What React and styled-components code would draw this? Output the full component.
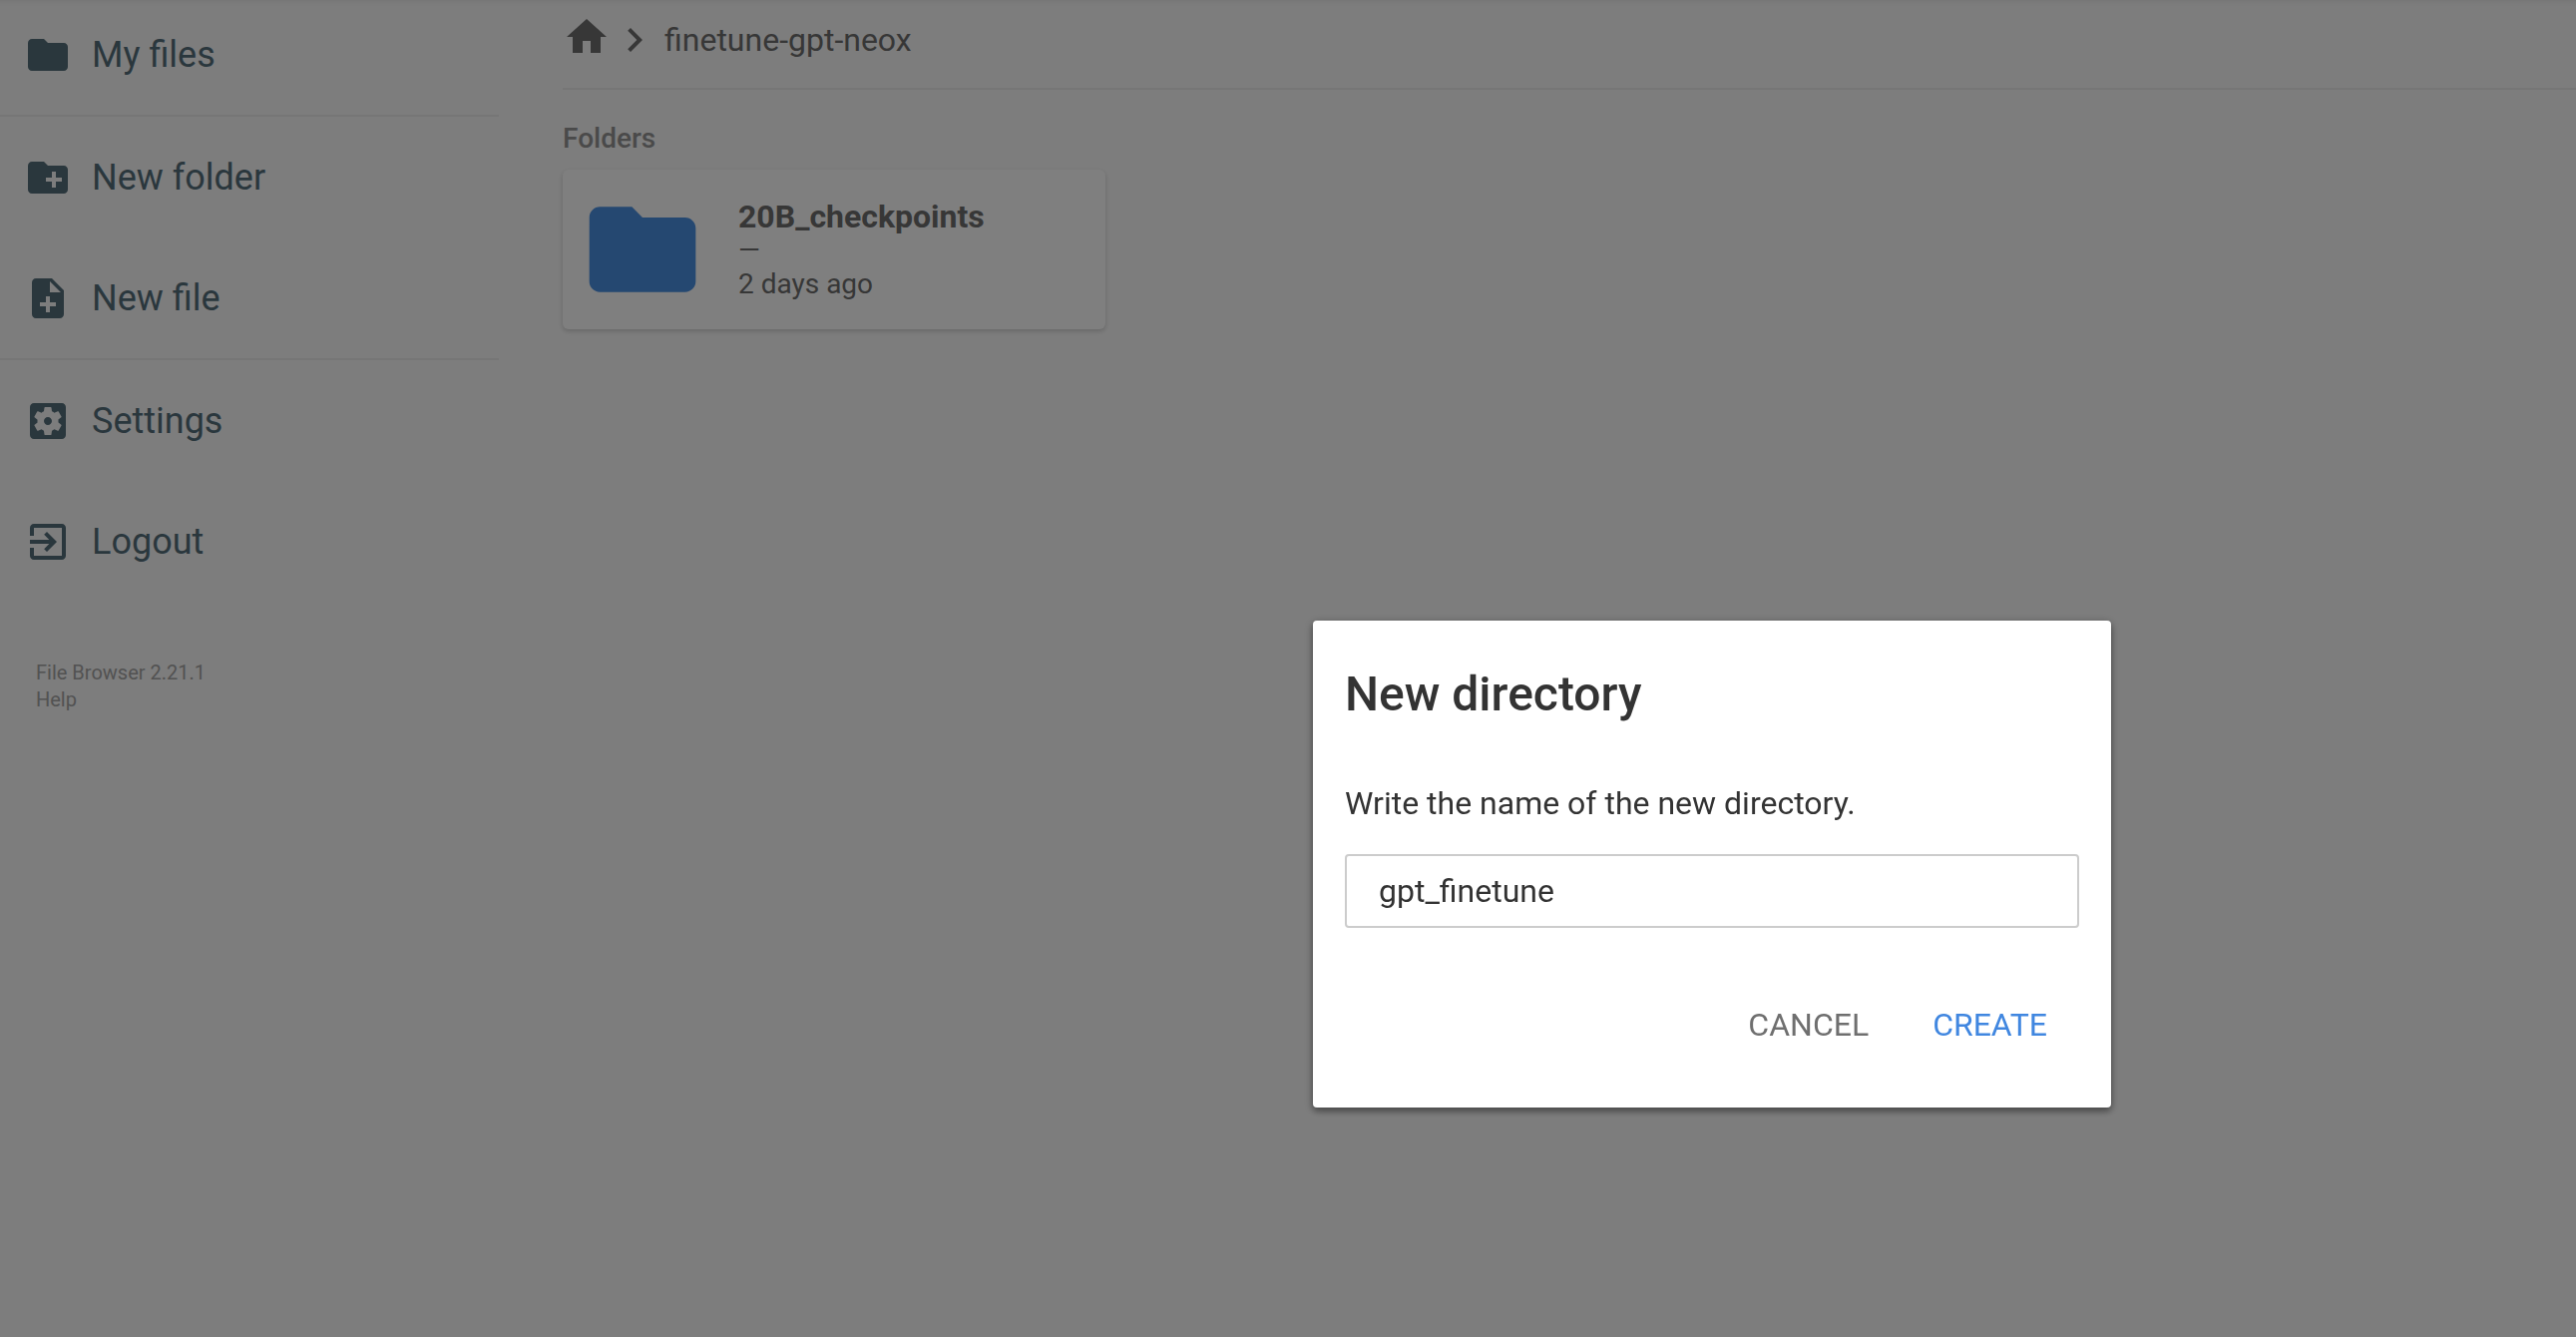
import React, { useState } from "react";
import styled, { createGlobalStyle } from "styled-components";

const GlobalStyle = createGlobalStyle`
  *, *::before, *::after { box-sizing: border-box; }
  html, body { margin: 0; min-height: 100%; background: #fafafa; }
  body {
    font-family: Roboto, sans-serif;
    font-size: 32px;
    color: #6f6f6f;
    overflow: hidden;
  }
`;

const Page = styled.div`
  display: grid;
  grid-template-columns: 500px 1fr;
  column-gap: 64px;
  min-height: 100vh;
  box-shadow: inset 0 6px 6px -6px rgba(0, 0, 0, 0.1);
`;

const Sidebar = styled.nav`
  margin-top: -6px;
`;

const Section = styled.div`
  & + & { border-top: 2px solid rgba(0, 0, 0, 0.05); }
`;

const Action = styled.button`
  display: flex;
  align-items: center;
  gap: 20px;
  width: 100%;
  height: 121px;
  padding: 0 24px;
  border: 0;
  background: none;
  color: #546e7a;
  font: 400 36px/44px Roboto, sans-serif;
  text-align: left;
  cursor: pointer;
`;

const Icon = styled.svg`
  flex: none;
  width: ${(p) => p.$size || 48}px;
  height: ${(p) => p.$size || 48}px;
  fill: ${(p) => p.$color || "currentColor"};
`;

const Credits = styled.div`
  padding: 58px 36px;
  display: flex;
  flex-direction: column;
  align-items: flex-start;
  font-size: 20px;
  line-height: 27px;
  color: #a5a5a5;

  a { color: inherit; text-decoration: none; }
`;

const Main = styled.main`
  min-width: 0;
`;

const Breadcrumbs = styled.div`
  display: flex;
  align-items: center;
  height: 90px;
  padding-bottom: 8px;
  border-bottom: 2px solid rgba(0, 0, 0, 0.05);
  line-height: 38px;
`;

const Crumb = styled.a`
  display: flex;
  padding-left: 6px;
  color: inherit;
  text-decoration: none;
`;

const HomeCrumb = styled(Crumb)`
  padding: 0 0 6px;
`;

const GroupTitle = styled.h2`
  margin: 32px 0 14px;
  font-size: 28px;
  line-height: 34px;
  font-weight: 500;
  color: #959595;
`;

const Item = styled.a`
  display: flex;
  align-items: center;
  gap: 32px;
  width: 544px;
  padding: 16px;
  border-radius: 6px;
  background: #fff;
  box-shadow: 0 2px 6px rgba(0, 0, 0, 0.06), 0 2px 4px rgba(0, 0, 0, 0.12);
  color: inherit;
  text-decoration: none;
  font-size: 28px;
  line-height: 34px;
`;

const Details = styled.div`
  display: flex;
  flex-direction: column;
  padding-top: 2px;
`;

const ItemName = styled.strong`
  font-size: 32px;
  font-weight: 700;
`;

const Overlay = styled.div`
  position: fixed;
  inset: 0;
  display: flex;
  align-items: center;
  justify-content: center;
  padding: 392px 0 0 850px;
  background: rgba(0, 0, 0, 0.5);
`;

const Dialog = styled.form`
  width: 800px;
  padding: 0 32px 48px;
  border-radius: 4px;
  background: #fff;
  box-shadow: 0 2px 10px rgba(0, 0, 0, 0.3), 0 4px 6px rgba(0, 0, 0, 0.25);
  color: #333;
`;

const DialogTitle = styled.h2`
  margin: 0;
  padding: 46px 0 0;
  font-size: 48px;
  line-height: 56px;
  font-weight: 500;
`;

const Prompt = styled.label`
  display: block;
  margin: 62px 0 32px;
  line-height: 38px;
`;

const NameInput = styled.input`
  display: block;
  width: 100%;
  height: 74px;
  padding: 0 32px;
  border: 2px solid #ccc;
  border-radius: 4px;
  outline: 0;
  background: #fff;
  color: #333;
  font: 400 32px/38px Roboto, sans-serif;
`;

const Buttons = styled.div`
  display: flex;
  justify-content: flex-end;
  margin-top: 62px;
`;

const FlatButton = styled.button`
  padding: 16px 32px;
  border: 0;
  border-radius: 4px;
  background: none;
  color: ${(p) => p.$color};
  font: 400 32px/38px Roboto, sans-serif;
  text-transform: uppercase;
  cursor: pointer;
`;

const paths = {
  folder: "M10 4H4c-1.1 0-1.99.9-1.99 2L2 18c0 1.1.9 2 2 2h16c1.1 0 2-.9 2-2V8c0-1.1-.9-2-2-2h-8l-2-2z",
  newFolder: "M20 6h-8l-2-2H4c-1.11 0-1.99.89-1.99 2L2 18c0 1.11.89 2 2 2h16c1.11 0 2-.89 2-2V8c0-1.11-.89-2-2-2zm-1 8h-3v3h-2v-3h-3v-2h3V9h2v3h3v2z",
  newFile: "M14 2H6c-1.1 0-1.99.9-1.99 2L4 20c0 1.1.89 2 1.99 2H18c1.1 0 2-.9 2-2V8l-6-6zm2 14h-3v3h-2v-3H8v-2h3v-3h2v3h3v2zm-3-7V3.5L18.5 9H13z",
  settings: "M12 10c-1.1 0-2 .9-2 2s.9 2 2 2 2-.9 2-2-.9-2-2-2zm7-7H5c-1.11 0-2 .9-2 2v14c0 1.1.89 2 2 2h14c1.11 0 2-.9 2-2V5c0-1.1-.89-2-2-2zm-1.75 9c0 .23-.02.46-.05.68l1.48 1.16c.13.11.17.3.08.45l-1.4 2.42c-.09.15-.27.21-.43.15l-1.74-.7c-.36.28-.76.51-1.18.69l-.26 1.85c-.03.17-.18.3-.35.3h-2.8c-.17 0-.32-.13-.35-.29l-.26-1.85c-.43-.18-.82-.41-1.18-.69l-1.74.7c-.16.06-.34 0-.43-.15l-1.4-2.42c-.09-.15-.05-.34.08-.45l1.48-1.16c-.03-.23-.05-.46-.05-.69 0-.23.02-.46.05-.68l-1.48-1.16c-.13-.11-.17-.3-.08-.45l1.4-2.42c.09-.15.27-.21.43-.15l1.74.7c.36-.28.76-.51 1.18-.69l.26-1.85c.03-.17.18-.3.35-.3h2.8c.17 0 .32.13.35.29l.26 1.85c.43.18.82.41 1.18.69l1.74-.7c.16-.06.34 0 .43.15l1.4 2.42c.09.15.05.34-.08.45l-1.48 1.16c.03.23.05.46.05.69z",
  logout: "M10.09 15.59L11.5 17l5-5-5-5-1.41 1.41L12.67 11H3v2h9.67l-2.58 2.59zM19 3H5c-1.11 0-2 .9-2 2v4h2V5h14v14H5v-4H3v4c0 1.1.89 2 2 2h14c1.1 0 2-.9 2-2V5c0-1.1-.9-2-2-2z",
  home: "M10 20v-6h4v6h5v-8h3L12 3 2 12h3v8z",
  chevron: "M10 6L8.59 7.41 13.17 12l-4.58 4.59L10 18l6-6z",
};

const Glyph = ({ name, size, color }) => (
  <Icon viewBox="0 0 24 24" aria-hidden="true" $size={size} $color={color}>
    <path d={paths[name]} />
  </Icon>
);

const sections = [
  [["folder", "My files"]],
  [["newFolder", "New folder"], ["newFile", "New file"]],
  [["settings", "Settings"], ["logout", "Logout"]],
];

export default function App() {
  const [name, setName] = useState("gpt_finetune");

  return (
    <>
      <GlobalStyle />
      <Page>
        <Sidebar>
          {sections.map((actions) => (
            <Section key={actions[0][0]}>
              {actions.map(([icon, label]) => (
                <Action key={icon} type="button">
                  <Glyph name={icon} />
                  <span>{label}</span>
                </Action>
              ))}
            </Section>
          ))}
          <Credits>
            <span>File Browser 2.21.1</span>
            <a href="#help">Help</a>
          </Credits>
        </Sidebar>
        <Main>
          <Breadcrumbs>
            <HomeCrumb href="#home" aria-label="Home"><Glyph name="home" /></HomeCrumb>
            <Glyph name="chevron" />
            <Crumb href="#finetune-gpt-neox">finetune-gpt-neox</Crumb>
          </Breadcrumbs>
          <GroupTitle>Folders</GroupTitle>
          <Item href="#20B_checkpoints">
            <Glyph name="folder" size={128} color="#4a90e2" />
            <Details>
              <ItemName>20B_checkpoints</ItemName>
              <span>—</span>
              <time>2 days ago</time>
            </Details>
          </Item>
        </Main>
      </Page>
      <Overlay>
        <Dialog role="dialog" aria-labelledby="dialog-title" onSubmit={(e) => e.preventDefault()}>
          <DialogTitle id="dialog-title">New directory</DialogTitle>
          <Prompt htmlFor="directory-name">Write the name of the new directory.</Prompt>
          <NameInput
            id="directory-name"
            type="text"
            value={name}
            onChange={(e) => setName(e.target.value)}
          />
          <Buttons>
            <FlatButton type="button" $color="#6f6f6f">Cancel</FlatButton>
            <FlatButton type="submit" $color="#4187e0">Create</FlatButton>
          </Buttons>
        </Dialog>
      </Overlay>
    </>
  );
}
